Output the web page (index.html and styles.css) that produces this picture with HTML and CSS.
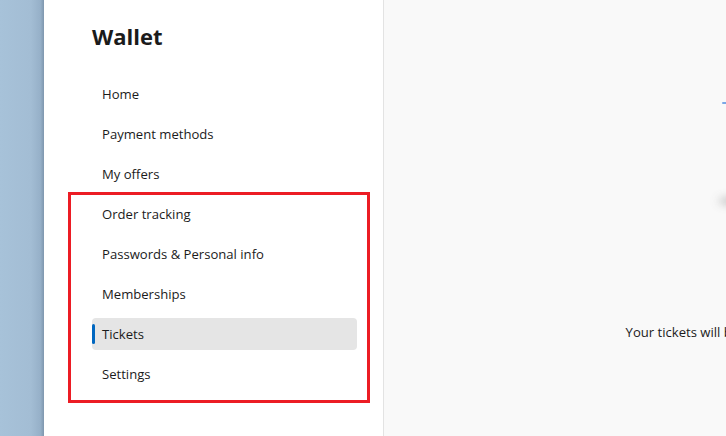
FILE: index.html
```html
<!DOCTYPE html>
<html lang="en">
<head>
<meta charset="utf-8">
<title>Wallet</title>
<link rel="stylesheet" href="styles.css">
</head>
<body>
<div class="app">
  <div class="desktop-strip"></div>
  <aside class="sidebar">
    <h1 class="title">Wallet</h1>
    <nav class="nav">
      <a class="nav-item">Home</a>
      <a class="nav-item">Payment methods</a>
      <a class="nav-item">My offers</a>
      <div class="highlight">
        <a class="nav-item">Order tracking</a>
        <a class="nav-item">Passwords &amp; Personal info</a>
        <a class="nav-item">Memberships</a>
        <a class="nav-item active">Tickets</a>
        <a class="nav-item">Settings</a>
      </div>
    </nav>
  </aside>
  <main class="content">
    <div class="content-inner">
      <svg class="illustration" width="200" height="200" viewBox="0 0 200 200" aria-hidden="true">
        <defs>
          <filter id="blur" x="-50%" y="-200%" width="200%" height="500%">
            <feGaussianBlur stdDeviation="5"/>
          </filter>
        </defs>
        <ellipse cx="158" cy="141" rx="60" ry="5" fill="#9a9a9a" filter="url(#blur)" opacity="0.8"/>
        <line x1="103" y1="43" x2="140" y2="43" stroke="#7aa7e6" stroke-width="2" stroke-linecap="round"/>
      </svg>
      <p class="empty-text">Your tickets will be shown here</p>
    </div>
  </main>
</div>
</body>
</html>
```

FILE: styles.css
```css
html, body {
  margin: 0;
  padding: 0;
  height: 100%;
  overflow: hidden;
}

body {
  font-family: "Open Sans", "Noto Sans", "Liberation Sans", sans-serif;
  color: #1b1b1b;
  background: #f9f9f9;
}

.app {
  display: flex;
  height: 436px;
  width: 1200px;
}

.desktop-strip {
  flex: 0 0 44px;
  background: linear-gradient(to right, #a7c2d9 0%, #a3bdd4 70%, #96b0c8 92%, #7f97ae 100%);
}

.sidebar {
  flex: 0 0 340px;
  background: #ffffff;
  border-right: 1px solid #e3e3e3;
  padding: 18px 0 0 48px;
  box-sizing: border-box;
}

.title {
  margin: 0;
  font-size: 22px;
  font-weight: 700;
  line-height: 36px;
  padding-bottom: 24px;
  color: #1b1b1b;
}

.nav {
  display: flex;
  flex-direction: column;
  width: 265px;
}

.nav-item {
  display: flex;
  align-items: center;
  height: 32px;
  margin-bottom: 8px;
  padding-left: 10px;
  font-size: 13.1px;
  color: #1b1b1b;
  border-radius: 4px;
  position: relative;
  box-sizing: border-box;
}

.highlight {
  display: flex;
  flex-direction: column;
  box-sizing: border-box;
  width: 302px;
  height: 211px;
  margin: -6px 0 0 -24px;
  padding: 3px 10px 0 21px;
  border: 3px solid #ec1c24;
}

.highlight .nav-item {
  width: 265px;
}

.nav-item.active {
  background: #e5e5e5;
}

.nav-item.active::before {
  content: "";
  position: absolute;
  left: 0;
  top: 6px;
  width: 3px;
  height: 20px;
  border-radius: 2px;
  background: #0067c0;
}

.content {
  flex: 0 0 672px;
  background: #f9f9f9;
}

.content-inner {
  display: flex;
  flex-direction: column;
  align-items: center;
  padding-top: 60px;
}

.illustration {
  display: block;
}

.empty-text {
  margin: 62px 0 0 0;
  font-size: 13.1px;
  line-height: 20px;
  white-space: nowrap;
  color: #1b1b1b;
}
```
